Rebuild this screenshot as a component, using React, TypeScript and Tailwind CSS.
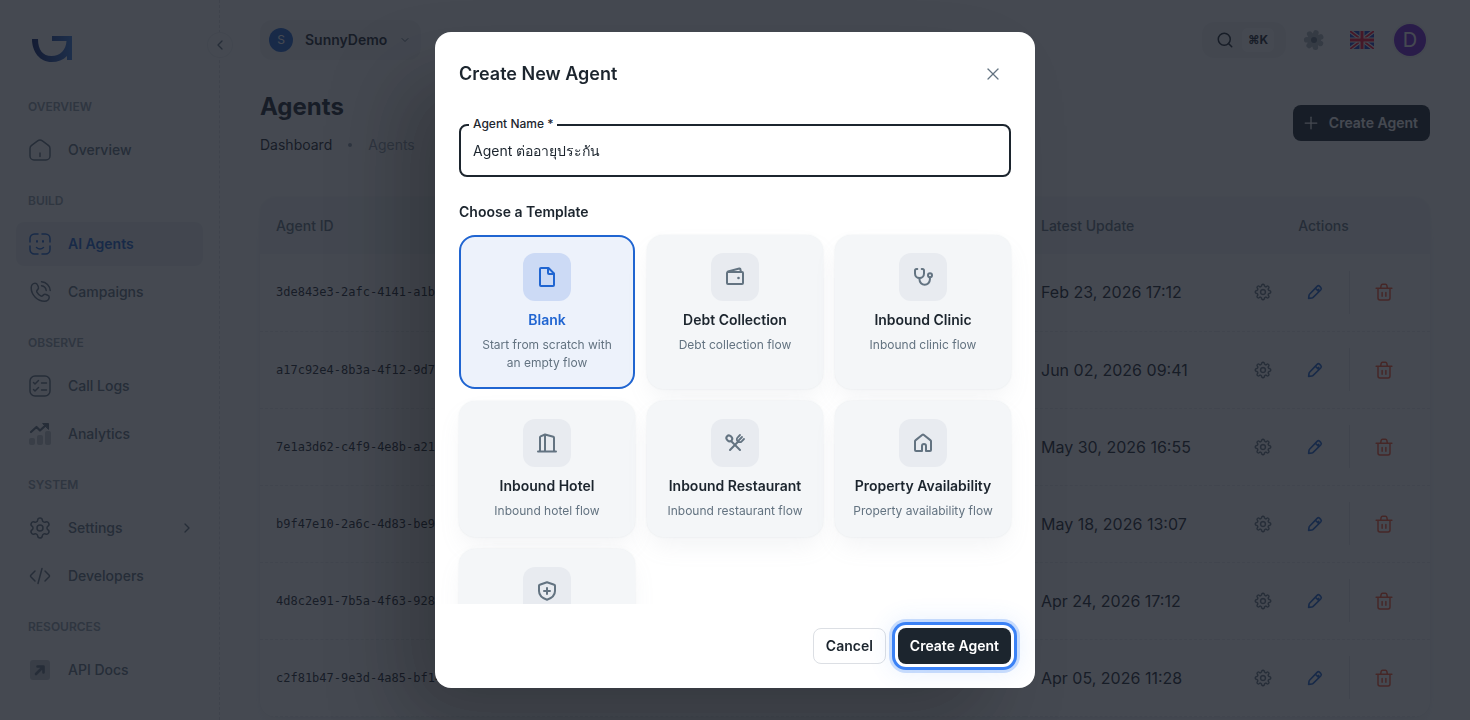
import React from "react";
import { ChevronDown, ChevronLeft, ChevronRight, Search, Settings, X, Plus } from "lucide-react";
import { GoGear } from "react-icons/go";

type IconProps = { className?: string };

function Stroke({ className = "size-6", width = 1.5, children }: { className?: string; width?: number; children: React.ReactNode }) {
  return (
    <svg
      viewBox="0 0 24 24"
      className={className}
      fill="none"
      stroke="currentColor"
      strokeWidth={width}
      strokeLinecap="round"
      strokeLinejoin="round"
      aria-hidden="true"
    >
      {children}
    </svg>
  );
}

function Logo() {
  return (
    <svg viewBox="0 0 40 26" className="h-[26px] w-10" aria-label="Home">
      <defs>
        <linearGradient id="logo" x1="0" y1="0" x2="1" y2="0">
          <stop offset="0" stopColor="#0b1f6b" />
          <stop offset="1" stopColor="#3b7de0" />
        </linearGradient>
      </defs>
      <path fill="url(#logo)" d="M0 3H6C6 14 11 20 19.500 20C28 20 34 14 34.500 5H20V0H40V24H35V20C31 24 26 26 19.500 26C8 26 0 16 0 3Z" />
    </svg>
  );
}

const HomeIcon = () => (
  <Stroke>
    <path d="M2 10.400c0-1.300.5-2.200 1.600-3l6-4.500c1.500-1.100 3.300-1.100 4.800 0l6 4.500c1.100.8 1.600 1.700 1.600 3V18a4 4 0 0 1-4 4H6a4 4 0 0 1-4-4z" />
    <path d="M12 15v3.500" />
  </Stroke>
);

const FaceIcon = () => (
  <Stroke>
    <path d="M10 2H6.500A4.500 4.500 0 0 0 2 6.500V10M14 2h3.500A4.500 4.500 0 0 1 22 6.500V10M10 22H6.500A4.500 4.500 0 0 1 2 17.500V14M14 22h3.500a4.500 4.500 0 0 0 4.500-4.500V14" />
    <path d="M8.500 15.500c2 1.600 5 1.600 7 0" />
    <path d="M9 9v.8M15 9v.8" strokeWidth="2" />
  </Stroke>
);

const PhoneIcon = () => (
  <Stroke>
    <path d="M3.200 7.800C3.200 5.200 5 3.200 7 3.200c1.200 0 2 .6 2.400 1.600l.9 2c.4 1 .2 2-.6 2.800l-.5.5c-.6.6-.7 1.300-.3 2a10 10 0 0 0 3.800 3.800c.7.4 1.400.3 2-.3l.5-.5c.8-.8 1.800-1 2.800-.6l1.800.8c1 .4 1.600 1.300 1.400 2.400-.3 2-2.300 3.500-4.700 3.500C9.500 21.200 3.200 15 3.200 7.800z" />
    <path d="M13.500 1.800c4.700.3 8.400 4 8.700 8.700M13.500 5.800c2.500.3 4.400 2.200 4.700 4.700" />
  </Stroke>
);

const ChecklistIcon = () => (
  <Stroke>
    <rect x="2" y="2" width="20" height="20" rx="5" />
    <path d="M5.500 8.500 7 10l3.500-3.500M5.500 15.500 7 17l3.500-3.500M13.500 9h5M13.500 16h5" />
  </Stroke>
);

const AnalyticsIcon = () => (
  <Stroke>
    <g stroke="none" fill="currentColor" opacity=".4">
      <rect x="1" y="16" width="6" height="7" rx="2" />
      <rect x="9" y="13" width="6" height="10" rx="2" />
      <rect x="17" y="9" width="6" height="14" rx="2" />
    </g>
    <path d="m3 10 5.500-5 3.500 3.500 6-5.500" strokeWidth="2.200" />
    <path d="M15 1.500h5.500V7z" fill="currentColor" strokeWidth="1" />
  </Stroke>
);

const GearIcon = () => <Settings className="size-6" strokeWidth={1.5} />;

const CodeIcon = () => (
  <Stroke>
    <path d="M7 7 2.800 11.200a1.200 1.200 0 0 0 0 1.600L7 17M17 7l4.200 4.200a1.200 1.200 0 0 1 0 1.600L17 17M14 4.500l-4 15" />
  </Stroke>
);

const DocsIcon = () => (
  <Stroke>
    <rect x="2" y="2" width="20" height="20" rx="3" fill="currentColor" stroke="none" opacity=".4" />
    <path d="M8 16l7-7M9.500 8.500H15.500V14.500" strokeWidth="2.600" />
  </Stroke>
);

const FlowerGear = () => (
  <svg viewBox="0 0 24 24" className="size-6" fill="currentColor" aria-hidden="true">
    <g opacity=".5">
      <circle cx="12" cy="12" r="7" />
      {[15, 66, 118, 169, 221, 272, 324].map((a) => (
        <circle key={a} cx="12" cy="4.700" r="2.800" transform={`rotate(${a} 12 12)`} />
      ))}
    </g>
    <circle cx="12" cy="12" r="3" />
  </svg>
);

const Flag = () => (
  <svg viewBox="0 0 24 18" className="h-[18px] w-6" aria-hidden="true">
    <rect width="24" height="18" rx="1" fill="#1b3fc5" />
    <path d="M0 0l24 18M24 0L0 18" stroke="#fff" strokeWidth="4" />
    <path d="M0 0l24 18M24 0L0 18" stroke="#ff0d33" strokeWidth="1.800" />
    <path d="M12 0v18M0 9h24" stroke="#fff" strokeWidth="5" />
    <path d="M12 0v18M0 9h24" stroke="#ff0d33" strokeWidth="3" />
  </svg>
);

const PencilIcon = () => (
  <Stroke className="size-[18px]" width={2.2}>
    <path d="M3.500 20.500l.6-4.300a2 2 0 0 1 .6-1.200L14.800 4.500a2.500 2.500 0 0 1 3.500 0l1.300 1.300a2.500 2.500 0 0 1 0 3.500L9.200 19.400a2 2 0 0 1-1.200.6zM12.500 7l4.600 4.600M15.500 10l1.500-1.500" />
  </Stroke>
);

const TrashIcon = () => (
  <Stroke className="size-[18px]" width={2}>
    <path d="M1.500 7h21M4 7v13a2.500 2.500 0 0 0 2.500 2.500h11A2.500 2.500 0 0 0 20 20V7M7.500 7l.7-3.700A2 2 0 0 1 10 1.800h4a2 2 0 0 1 1.800 1.500L16.500 7M9.500 12.500v5M14.500 12.500v5" />
  </Stroke>
);

const FileIcon = () => (
  <Stroke width={2}>
    <path d="M13.500 3H6a1 1 0 0 0-1 1v16a1 1 0 0 0 1 1h12a1 1 0 0 0 1-1V8.500z" />
    <path d="M13 3.500V8a1 1 0 0 0 1 1h4.500" />
  </Stroke>
);

const WalletIcon = () => (
  <Stroke width={2}>
    <rect x="4" y="7" width="16" height="12" rx="1" />
    <path d="M5 6.500l11.300-3a.8.8 0 0 1 1 .6L18 7" />
    <circle cx="15.500" cy="13" r="1.300" fill="currentColor" stroke="none" />
  </Stroke>
);

const StethoscopeIcon = () => (
  <Stroke width={2}>
    <path d="M6.300 4H5.600C4.500 4 4 4.700 4 5.600v2.900a4.500 4.500 0 0 0 9 0V5.600c0-.9-.5-1.600-1.600-1.600h-.7" />
    <path d="M8.500 13.500V14.500a5.200 5.200 0 0 0 10.400 0v-2" />
    <circle cx="19" cy="10.300" r="2" />
  </Stroke>
);

const BuildingIcon = () => (
  <Stroke width={2}>
    <path d="M3 20.500h18M5 20V6.300a1 1 0 0 1 .6-.9L10 3.500l8.300 2.200a1 1 0 0 1 .7 1V20M10 3.500V20" />
  </Stroke>
);

const CutleryIcon = () => (
  <Stroke width={2}>
    <path d="M17 19 8.300 10.200M7 19l8.500-8.700" />
    <ellipse cx="6.300" cy="7.400" rx="2.600" ry="3.100" transform="rotate(-45 6.300 7.400)" />
    <path d="M17 4l-2.300 2.300a2.700 2.700 0 0 0 0 4 2.700 2.700 0 0 0 4 0L21 8M16 9l3-3" strokeWidth="1.800" />
  </Stroke>
);

const HouseIcon = () => (
  <Stroke width={2}>
    <path d="M4 10.200a1 1 0 0 1 .4-.8l7-5.600a1 1 0 0 1 1.200 0l7 5.600a1 1 0 0 1 .4.8V19a1 1 0 0 1-1 1h-4v-5a2 2 0 0 0-4 0V20H5a1 1 0 0 1-1-1z" />
  </Stroke>
);

const ShieldIcon = () => (
  <Stroke width={2}>
    <path d="M12 3.200l7.300 2.600a1 1 0 0 1 .7 1V12c0 4-3 7-8 8.800C7 19 4 16 4 12V6.800a1 1 0 0 1 .7-1zM12 9v6M9 12h6" />
  </Stroke>
);

type NavItem = { label: string; icon: React.FC<IconProps>; active?: boolean; nested?: boolean };

const navGroups: { title: string; items: NavItem[] }[] = [
  { title: "Overview", items: [{ label: "Overview", icon: HomeIcon }] },
  { title: "Build", items: [{ label: "AI Agents", icon: FaceIcon, active: true }, { label: "Campaigns", icon: PhoneIcon }] },
  { title: "Observe", items: [{ label: "Call Logs", icon: ChecklistIcon }, { label: "Analytics", icon: AnalyticsIcon }] },
  { title: "System", items: [{ label: "Settings", icon: GearIcon, nested: true }, { label: "Developers", icon: CodeIcon }] },
  { title: "Resources", items: [{ label: "API Docs", icon: DocsIcon }] },
];

const agents = [
  { id: "3de843e3-2afc-4141-a1b7-5c0de1f3a942", updated: "Feb 23, 2026 17:12" },
  { id: "a17c92e4-8b3a-4f12-9d76-2be04c81f35a", updated: "Jun 02, 2026 09:41" },
  { id: "7e1a3d62-c4f9-4e8b-a213-90bd6e7f1c58", updated: "May 30, 2026 16:55" },
  { id: "b9f47e10-2a6c-4d83-be95-73c1d0a8e426", updated: "May 18, 2026 13:07" },
  { id: "4d8c2e91-7b5a-4f63-9280-e6a1b3c7d95f", updated: "Apr 24, 2026 17:12" },
  { id: "c2f81b47-9e3d-4a85-bf14-08d7c5e2a631", updated: "Apr 05, 2026 11:28" },
];

const templates: { name: string; text: string; icon: React.FC<IconProps> }[] = [
  { name: "Blank", text: "Start from scratch with an empty flow", icon: FileIcon },
  { name: "Debt Collection", text: "Debt collection flow", icon: WalletIcon },
  { name: "Inbound Clinic", text: "Inbound clinic flow", icon: StethoscopeIcon },
  { name: "Inbound Hotel", text: "Inbound hotel flow", icon: BuildingIcon },
  { name: "Inbound Restaurant", text: "Inbound restaurant flow", icon: CutleryIcon },
  { name: "Property Availability", text: "Property availability flow", icon: HouseIcon },
  { name: "Insurance", text: "Insurance flow", icon: ShieldIcon },
];

function Sidebar() {
  return (
    <aside className="relative w-[220px] shrink-0 border-r border-dashed border-[#919eab]/30 px-4">
      <a href="#home" className="mt-9 mb-4 ml-4 block w-10">
        <Logo />
      </a>
      <button
        type="button"
        aria-label="Collapse menu"
        className="absolute top-8 -right-[14px] flex size-[26px] items-center justify-center rounded-full border border-[#919eab]/15 bg-white text-[#637381]"
      >
        <ChevronLeft className="size-4" />
      </button>
      <nav>
        {navGroups.map((group) => (
          <section key={group.title}>
            <h2 className="px-3 pt-5 pb-3 text-xs leading-[18px] font-semibold text-[#919eab] uppercase">{group.title}</h2>
            <ul className="flex flex-col gap-1">
              {group.items.map(({ label, icon: Icon, active, nested }) => (
                <li key={label}>
                  <a
                    href="#nav"
                    className={
                      active
                        ? "flex h-11 items-center gap-4 rounded-lg bg-[#919eab]/15 pr-2 pl-3 text-sm font-semibold text-[#2065d1]"
                        : "flex h-11 items-center gap-4 rounded-lg pr-2 pl-3 text-sm font-medium text-[#637381]"
                    }
                  >
                    <Icon />
                    <span className="flex-1">{label}</span>
                    {nested && <ChevronRight className="size-4" />}
                  </a>
                </li>
              ))}
            </ul>
          </section>
        ))}
      </nav>
    </aside>
  );
}

function TopBar() {
  return (
    <header className="flex h-20 items-center justify-between pr-1">
      <button type="button" className="flex h-10 items-center rounded-xl bg-[#919eab]/10 pr-2.5 pl-[9px] text-[#1c252e]">
        <span className="flex size-6 items-center justify-center rounded-full bg-[#2065d1] text-xs text-white">S</span>
        <span className="ml-3 text-sm font-semibold">SunnyDemo</span>
        <ChevronDown className="ml-3 size-3 text-[#637381]" />
      </button>
      <div className="flex items-center">
        <button type="button" aria-label="Search" className="flex h-9 items-center gap-2 rounded-xl bg-[#919eab]/10 pr-3 pl-3.5 text-[#1c252e]">
          <Search className="size-[18px]" />
          <kbd className="flex h-6 w-8 items-center justify-center rounded-md bg-white font-[Inter,sans-serif] text-xs font-bold">⌘K</kbd>
        </button>
        <button type="button" aria-label="Preferences" className="ml-4 text-[#637381]">
          <FlowerGear />
        </button>
        <button type="button" aria-label="Language" className="ml-6">
          <Flag />
        </button>
        <button type="button" aria-label="Account" className="ml-5 flex size-8 items-center justify-center rounded-full bg-[#7420d8] text-xl text-white ring-2 ring-[#919eab]/10">
          D
        </button>
      </div>
    </header>
  );
}

function AgentsPage() {
  return (
    <main className="min-w-0 flex-1 px-10">
      <TopBar />
      <div className="mt-[9px] flex items-center justify-between">
        <div>
          <h1 className="text-2xl leading-9 font-bold text-[#1c252e]">Agents</h1>
          <nav className="mt-[9px] flex items-center text-sm leading-[22px] text-[#1c252e]">
            <a href="#dashboard">Dashboard</a>
            <span className="mx-4 size-1 rounded-full bg-[#919eab]" />
            <span className="text-[#919eab]">Agents</span>
          </nav>
        </div>
        <button type="button" className="flex h-9 items-center gap-2 rounded-lg bg-[#1c252e] pr-3 pl-2 text-sm font-semibold text-white">
          <Plus className="size-5" strokeWidth={1.5} />
          Create Agent
        </button>
      </div>
      <div className="mt-[41px] overflow-hidden rounded-2xl shadow-[0_0_2px_rgba(145,158,171,0.2),0_12px_24px_-4px_rgba(145,158,171,0.12)]">
        <table className="w-full table-fixed border-collapse text-left">
          <thead>
            <tr className="h-[57px] bg-[#f4f6f8] text-sm text-[#637381]">
              <th className="w-[300px] px-4 font-medium">Agent ID</th>
              <th className="px-4 font-medium">Name</th>
              <th className="w-48 px-4 font-medium">Latest Update</th>
              <th className="w-[213px] px-4 text-center font-medium">Actions</th>
            </tr>
          </thead>
          <tbody>
            {agents.map((agent) => (
              <tr key={agent.id} className="h-[77px] border-b border-dashed border-[#919eab]/20 text-base text-[#1c252e]">
                <td className="px-4 font-['DejaVu_Sans_Mono',monospace] text-xs">{agent.id}</td>
                <td className="px-4">Agent</td>
                <td className="px-4 whitespace-nowrap">{agent.updated}</td>
                <td className="px-4">
                  <div className="flex items-center justify-center gap-4">
                    <button type="button" aria-label="Settings" className="flex size-9 items-center justify-center text-[#637381]">
                      <GoGear className="size-[18px]" stroke="currentColor" strokeWidth={0.4} />
                    </button>
                    <button type="button" aria-label="Edit" className="flex size-9 items-center justify-center text-[#2065d1]">
                      <PencilIcon />
                    </button>
                    <span className="h-[43px] w-px bg-[#919eab]/25" />
                    <button type="button" aria-label="Delete" className="flex size-9 items-center justify-center text-[#ff5630]">
                      <TrashIcon />
                    </button>
                  </div>
                </td>
              </tr>
            ))}
          </tbody>
        </table>
      </div>
    </main>
  );
}

function CreateAgentDialog() {
  const [selected, setSelected] = React.useState("Blank");
  const [name, setName] = React.useState("Agent ต่ออายุประกัน");
  return (
    <div className="fixed inset-0 flex items-center justify-center bg-[#161c25]/80 p-8">
      <form
        role="dialog"
        aria-modal="true"
        aria-labelledby="dialog-title"
        onSubmit={(e) => e.preventDefault()}
        className="flex max-h-full w-full max-w-[600px] flex-col overflow-hidden rounded-2xl bg-white text-[#1c252e] shadow-[-40px_40px_80px_-8px_rgba(0,0,0,0.24)]"
      >
        <div className="flex shrink-0 items-center justify-between p-6">
          <h2 id="dialog-title" className="text-lg leading-7 font-semibold">
            Create New Agent
          </h2>
          <button type="button" aria-label="Close" className="flex size-9 items-center justify-center rounded-full text-[#637381]">
            <X className="size-5" strokeWidth={1.5} />
          </button>
        </div>
        <div className="min-h-0 flex-1 overflow-y-auto px-6 pt-2 pb-6 [scrollbar-width:none]">
          <div className="relative">
            <label htmlFor="agent-name" className="absolute -top-2 left-2.5 bg-white px-1 text-xs leading-4 font-medium">
              Agent Name *
            </label>
            <input
              id="agent-name"
              value={name}
              onChange={(e) => setName(e.target.value)}
              className="block h-[53px] w-full rounded-lg border-2 border-[#1c252e] bg-transparent px-3 text-sm outline-none"
            />
          </div>
          <h3 className="mt-6 mb-3 text-sm leading-[22px] font-semibold">Choose a Template</h3>
          <div className="grid grid-cols-3 gap-3">
            {templates.map(({ name: title, text, icon: Icon }) => {
              const on = title === selected;
              return (
                <button
                  key={title}
                  type="button"
                  aria-pressed={on}
                  onClick={() => setSelected(title)}
                  className={
                    on
                      ? "flex flex-col items-center rounded-2xl border-2 border-[#2065d1] bg-[#edf2fb] px-3.5 pt-4 pb-[15px]"
                      : "flex flex-col items-center rounded-2xl border-2 border-[#f4f6f8] bg-[#f4f6f8] px-3.5 pt-4 pb-[15px] shadow-[0_0_2px_rgba(145,158,171,0.2),0_12px_24px_-4px_rgba(145,158,171,0.12)]"
                  }
                >
                  <span
                    className={
                      on
                        ? "flex size-12 items-center justify-center rounded-xl bg-[#ccdaf5] text-[#2065d1]"
                        : "flex size-12 items-center justify-center rounded-xl bg-[#e8ebf0] text-[#637381]"
                    }
                  >
                    <Icon />
                  </span>
                  <span className={on ? "mt-2 text-sm leading-[22px] font-semibold whitespace-nowrap text-[#2065d1]" : "mt-2 text-sm leading-[22px] font-semibold whitespace-nowrap"}>
                    {title}
                  </span>
                  <span className="mt-[5px] text-xs leading-[18px] text-[#637381]">{text}</span>
                </button>
              );
            })}
          </div>
        </div>
        <div className="flex shrink-0 justify-end gap-3 p-6">
          <button type="button" className="h-9 rounded-lg border border-[#dcdfe4] px-3 text-sm font-semibold">
            Cancel
          </button>
          <button
            type="submit"
            className="h-9 rounded-lg bg-[#1c252e] px-3 text-sm font-semibold text-white shadow-[0_0_0_3px_#fff,0_0_0_6px_#3b82f6,0_0_0_9px_rgba(59,130,246,0.25),0_0_24px_8px_rgba(59,130,246,0.12)]"
          >
            Create Agent
          </button>
        </div>
      </form>
    </div>
  );
}

export default function App() {
  return (
    <div className="flex h-screen overflow-hidden bg-white font-[Inter,sans-serif]">
      <Sidebar />
      <AgentsPage />
      <CreateAgentDialog />
    </div>
  );
}
